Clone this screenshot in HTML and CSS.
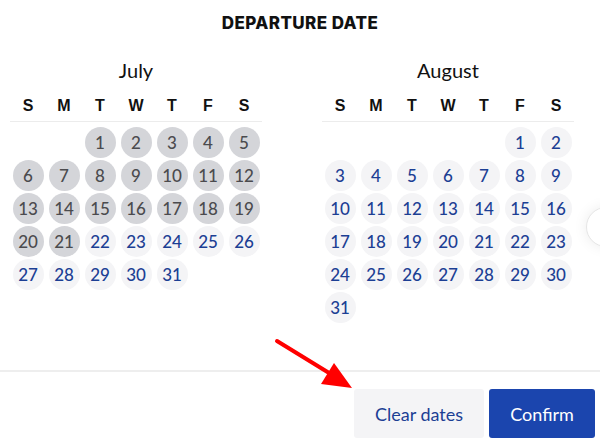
FILE: index.html
```html
<!DOCTYPE html>
<html lang="en">
<head>
    <meta charset="UTF-8">
    <meta name="viewport" content="width=device-width, initial-scale=1.0">
    <title>Departure Date</title>
    <link rel="stylesheet" href="styles.css">
</head>
<body>
    <div class="picker">
        <h1 class="title">DEPARTURE DATE</h1>

        <div class="months">
            <!-- July -->
            <section class="month">
                <h2>July</h2>
                <div class="weekdays">
                    <span>S</span><span>M</span><span>T</span><span>W</span><span>T</span><span>F</span><span>S</span>
                </div>
                <div class="days">
                    <span class="empty"></span><span class="empty"></span>
                    <span class="day off">1</span><span class="day off">2</span><span class="day off">3</span><span class="day off">4</span><span class="day off">5</span>
                    <span class="day off">6</span><span class="day off">7</span><span class="day off">8</span><span class="day off">9</span><span class="day off">10</span><span class="day off">11</span><span class="day off">12</span>
                    <span class="day off">13</span><span class="day off">14</span><span class="day off">15</span><span class="day off">16</span><span class="day off">17</span><span class="day off">18</span><span class="day off">19</span>
                    <span class="day off">20</span><span class="day off">21</span><span class="day">22</span><span class="day">23</span><span class="day">24</span><span class="day">25</span><span class="day">26</span>
                    <span class="day">27</span><span class="day">28</span><span class="day">29</span><span class="day">30</span><span class="day">31</span>
                </div>
            </section>

            <!-- August -->
            <section class="month">
                <h2>August</h2>
                <div class="weekdays">
                    <span>S</span><span>M</span><span>T</span><span>W</span><span>T</span><span>F</span><span>S</span>
                </div>
                <div class="days">
                    <span class="empty"></span><span class="empty"></span><span class="empty"></span><span class="empty"></span><span class="empty"></span>
                    <span class="day">1</span><span class="day">2</span>
                    <span class="day">3</span><span class="day">4</span><span class="day">5</span><span class="day">6</span><span class="day">7</span><span class="day">8</span><span class="day">9</span>
                    <span class="day">10</span><span class="day">11</span><span class="day">12</span><span class="day">13</span><span class="day">14</span><span class="day">15</span><span class="day">16</span>
                    <span class="day">17</span><span class="day">18</span><span class="day">19</span><span class="day">20</span><span class="day">21</span><span class="day">22</span><span class="day">23</span>
                    <span class="day">24</span><span class="day">25</span><span class="day">26</span><span class="day">27</span><span class="day">28</span><span class="day">29</span><span class="day">30</span>
                    <span class="day">31</span>
                </div>
            </section>
        </div>

        <!-- next month button, mostly off screen -->
        <button class="next" aria-label="Next month"></button>

        <div class="footer">
            <button class="btn clear">Clear dates</button>
            <button class="btn confirm">Confirm</button>
        </div>

        <!-- annotation arrow -->
        <svg class="arrow" width="600" height="445" viewBox="0 0 600 445">
            <line x1="277" y1="341" x2="334" y2="376" stroke="#ff0000" stroke-width="4" stroke-linecap="round"/>
            <polygon points="352,388 321,384 334,363" fill="#ff0000"/>
        </svg>
    </div>
</body>
</html>
```

FILE: styles.css
```css
/* Basic styling */
body {
    margin: 0;
    padding: 0;
    background-color: #fff;
    font-family: Lato, "Open Sans", sans-serif;
    overflow: hidden;
}

.picker {
    position: relative;
    width: 600px;
    height: 445px;
}

.title {
    margin: 0;
    padding-top: 13px;
    font-family: Inter, sans-serif;
    font-size: 17px;
    line-height: 20px;
    font-weight: 800;
    letter-spacing: 0.4px;
    text-align: center;
    color: #111;
}

.months {
    display: flex;
    gap: 60px;
    padding-left: 10px;
    height: 337px;
}

.month {
    width: 252px;
}

.month h2 {
    margin: 25px 0 14px;
    font-size: 20px;
    line-height: 24px;
    font-weight: 400;
    text-align: center;
    color: #111;
}

.weekdays {
    display: grid;
    grid-template-columns: repeat(7, 36px);
    padding-bottom: 5px;
    border-bottom: 1px solid #ececec;
    font-family: "Liberation Sans", Arial, sans-serif;
    font-size: 16px;
    line-height: 20px;
    font-weight: 700;
    text-align: center;
    color: #111;
}

.days {
    display: grid;
    grid-template-columns: repeat(7, 36px);
    grid-auto-rows: 33px;
    margin-top: 4px;
    justify-items: center;
    align-items: center;
}

.day {
    width: 31px;
    height: 31px;
    border-radius: 50%;
    display: flex;
    align-items: center;
    justify-content: center;
    font-size: 17px;
    font-weight: 500;
    background-color: #f4f4f6;
    color: #1c3f94;
}

.day.off {
    background-color: #d4d5d9;
    color: #4b4b4e;
}

/* Next arrow */
.next {
    position: absolute;
    left: 586px;
    top: 207px;
    width: 40px;
    height: 40px;
    padding: 0;
    border: 1px solid #e6e6e6;
    border-radius: 50%;
    background-color: #fff;
    box-shadow: 0 0 14px rgba(0, 0, 0, 0.08);
}

/* Footer */
.footer {
    display: flex;
    justify-content: flex-end;
    gap: 5px;
    padding: 17px 5px 0 0;
    border-top: 2px solid #eeeeee;
}

.btn {
    height: 49px;
    border: none;
    border-radius: 3px;
    font-family: Lato, "Open Sans", sans-serif;
    font-size: 18px;
    cursor: pointer;
}

.clear {
    width: 130px;
    background-color: #f4f4f6;
    color: #1c3f94;
}

.confirm {
    width: 106px;
    background-color: #1b45ae;
    color: #fff;
}

.arrow {
    position: absolute;
    top: 0;
    left: 0;
    pointer-events: none;
}
```
